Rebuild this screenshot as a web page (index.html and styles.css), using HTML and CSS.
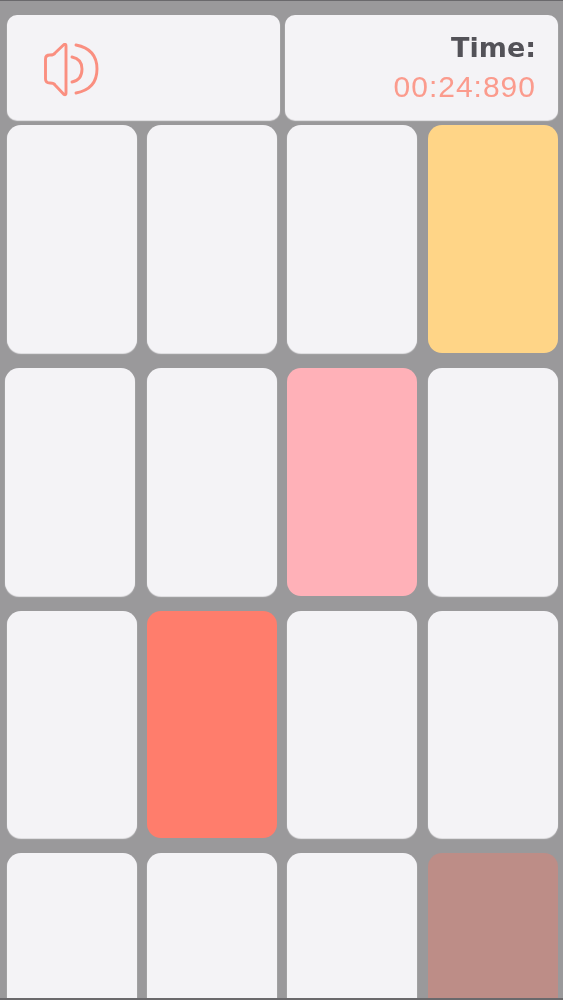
FILE: index.html
```html
<!DOCTYPE html>
<html lang="en">
<head>
<meta charset="utf-8">
<title>Tiles</title>
<link rel="stylesheet" href="styles.css">
</head>
<body>
<div class="screen">
  <header class="top">
    <div class="panel sound">
      <svg class="icon" viewBox="0 0 56 54" width="56" height="54" fill="none" stroke="#fa8f80" stroke-width="2.9" stroke-linecap="round" stroke-linejoin="round">
        <path d="M20 1.5 Q22 0.5 22 3 L22 50 Q22 52.5 20 51.5 L11 42 Q10 40 6 40 Q1.5 40 1.5 36 L1.5 16 Q1.5 12 6 12 Q10 12 11 10 Z"/>
        <path d="M28 14 Q38 16 38 26 Q38 37 28 39"/>
        <path d="M32 2 Q53 6 53 26 Q53 46 32 50"/>
      </svg>
    </div>
    <div class="panel timer">
      <div class="label">Time:</div>
      <div class="value">00:24:890</div>
    </div>
  </header>
  <main class="board">
    <div class="tile"></div><div class="tile"></div><div class="tile"></div><div class="tile yellow"></div>
    <div class="tile shifted"></div><div class="tile"></div><div class="tile pink"></div><div class="tile"></div>
    <div class="tile"></div><div class="tile coral"></div><div class="tile"></div><div class="tile"></div>
    <div class="tile"></div><div class="tile"></div><div class="tile"></div><div class="tile brown"></div>
  </main>
</div>
</body>
</html>
```
FILE: styles.css
```css
* { box-sizing: border-box; }
html, body { margin: 0; height: 100%; }
body { background: #9a999b; overflow: hidden; }
.screen {
  height: 1000px;
  padding: 14px 5px 0 7px;
  border-top: 1px solid #6a696c;
  border-bottom: 2px solid #6a696c;
  overflow: hidden;
  font-family: "DejaVu Sans", "Liberation Sans", sans-serif;
}
.top {
  display: grid;
  grid-template-columns: 273px 273px;
  column-gap: 5px;
}
.panel {
  height: 105px;
  background: #f4f3f6;
  border-radius: 10px;
  box-shadow: 0 1px 1px #e6e5e8;
}
.sound { display: flex; align-items: flex-start; padding: 28px 0 0 37px; }
.icon { display: block; filter: blur(0.4px); }
.timer {
  display: flex;
  flex-direction: column;
  align-items: flex-end;
  padding: 16px 22px 0 0;
}
.label { font-size: 27px; font-weight: 700; color: #535258; line-height: 34px; filter: blur(0.4px); }
.value {
  font-family: "Liberation Sans", Arial, sans-serif;
  font-size: 30px;
  color: #fb9b8d;
  letter-spacing: 1px;
  line-height: 34px;
  margin-top: 5px;
  filter: blur(0.4px);
}
.board {
  display: grid;
  grid-template-columns: 140px 140px 141px 130px;
  grid-template-rows: 228px 228px 227px 228px;
  row-gap: 15px;
  margin-top: 5px;
}
.tile { width: 130px; background: #f4f3f6; border-radius: 14px; box-shadow: 0 1px 1px #e6e5e8; }
.shifted { margin-left: -2px; }
.yellow { background: #ffd587; box-shadow: none; }
.pink { background: #ffb1b8; box-shadow: none; }
.coral { background: #ff7d6c; box-shadow: none; }
.brown { background: #bd8d87; box-shadow: none; }
```
